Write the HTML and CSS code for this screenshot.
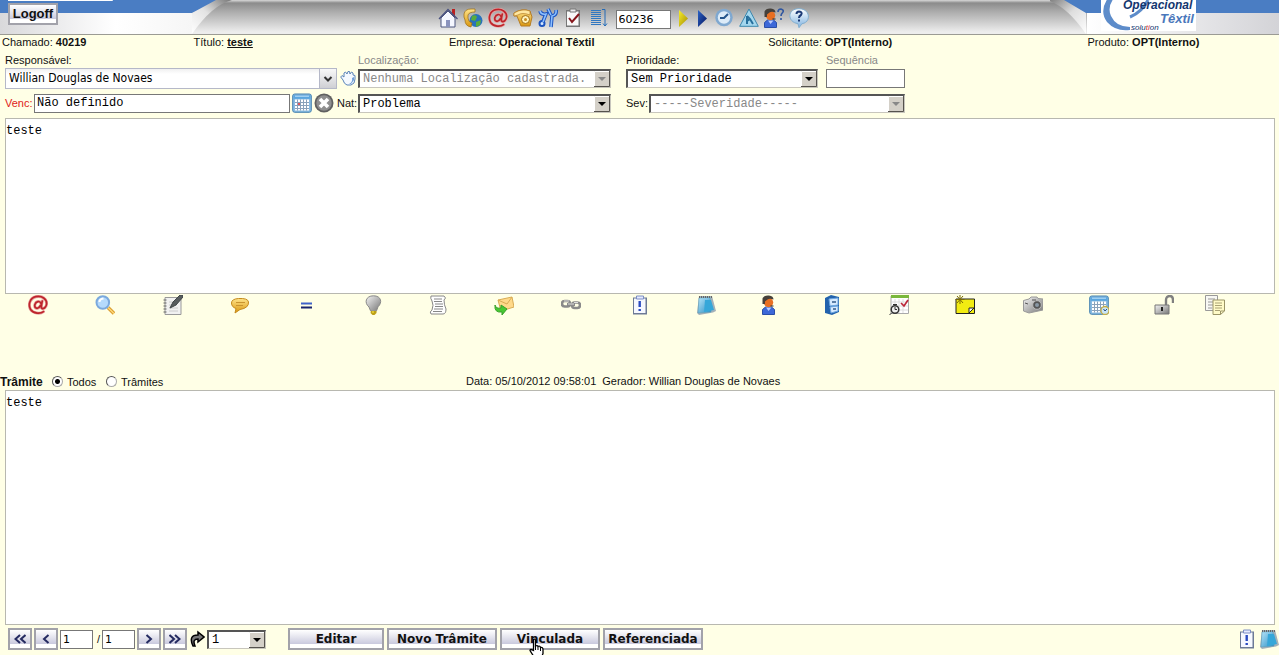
FILE: index.html
```html
<!DOCTYPE html>
<html lang="pt-BR">
<head>
<meta charset="utf-8">
<title>Chamado 40219</title>
<link rel="stylesheet" href="styles.css">
</head>
<body>
<svg class="defs" aria-hidden="true">
  <defs>
    <linearGradient id="g-blue" x1="0" y1="0" x2="1" y2="1"><stop offset="0" stop-color="#b9e6fa"/><stop offset="1" stop-color="#2a8fc4"/></linearGradient>
    <linearGradient id="g-glass" x1="0" y1="0" x2="0" y2="1"><stop offset="0" stop-color="#fff"/><stop offset="1" stop-color="#7fb2e0"/></linearGradient>
    <linearGradient id="g-gold" x1="0" y1="0" x2="0" y2="1"><stop offset="0" stop-color="#ffe48a"/><stop offset="1" stop-color="#d9960f"/></linearGradient>
    <linearGradient id="g-metal" x1="0" y1="0" x2="1" y2="1"><stop offset="0" stop-color="#f4f4f4"/><stop offset="1" stop-color="#777"/></linearGradient>
    <linearGradient id="g-arrow" x1="0" y1="0" x2="1" y2="1"><stop offset="0" stop-color="#f7ee2a"/><stop offset="1" stop-color="#a38a00"/></linearGradient>
    <linearGradient id="g-navy" x1="0" y1="0" x2="1" y2="1"><stop offset="0" stop-color="#2b63c8"/><stop offset="1" stop-color="#04145c"/></linearGradient>
    <linearGradient id="g-head" x1="0" y1="0" x2="1" y2="0"><stop offset="0" stop-color="#d9d9db"/><stop offset=".6" stop-color="#fff"/><stop offset="1" stop-color="#f6f6f6"/></linearGradient>
    <linearGradient id="g-foldl" x1="0" y1="1" x2="1" y2="0"><stop offset="0" stop-color="#fff"/><stop offset=".5" stop-color="#e3e3e3"/><stop offset="1" stop-color="#777"/></linearGradient>
    <linearGradient id="g-foldr" x1="1" y1="1" x2="0" y2="0"><stop offset="0" stop-color="#fff"/><stop offset=".5" stop-color="#dedede"/><stop offset="1" stop-color="#777"/></linearGradient>
    <linearGradient id="g-tail" x1="0" y1="0" x2="1" y2="0"><stop offset="0" stop-color="#fff"/><stop offset="1" stop-color="#d3d3d7"/></linearGradient>
  </defs>
  <symbol id="at" viewBox="0 0 20 20"><g fill="none" stroke-linecap="round"><path d="M15.500 16.600C12.500 19 5.500 18.800 2.600 14.500C-.2 9.500 2 3 7.800 1.700C14 .4 19 4 18.600 9C18.300 12.500 15.500 14 14 13.400C12.800 12.800 13.200 11.500 14.300 6M13 8.500C12 5.500 8 6 6.900 9.500C6 13.500 10 15 12.500 10.500" stroke="#e9a0a0" stroke-width="3"/><path d="M15.500 16.600C12.500 19 5.500 18.800 2.600 14.500C-.2 9.500 2 3 7.800 1.700C14 .4 19 4 18.600 9C18.300 12.500 15.500 14 14 13.400C12.800 12.800 13.200 11.500 14.300 6M13 8.500C12 5.500 8 6 6.900 9.500C6 13.500 10 15 12.500 10.500" stroke="#bd252b" stroke-width="1.700"/></g></symbol>
  <symbol id="calendar" viewBox="0 0 20 20"><rect x=".7" y="1" width="18.600" height="18.300" rx="2" fill="#88bbe2" stroke="#4682b0"/><path d="M1.500 2.200h17v3.600h-17z" fill="#5aa6df"/><path d="M3 3.200h14" stroke="#bfe2f8"/><path d="M3 6.500h14v11H3z" fill="#fff"/><path d="M5.500 6.500v11M8.500 6.500v11M11.500 6.500v11M14.500 6.500v11M3 9.500h14M3 12.500h14M3 15.500h14" stroke="#8aa2ba"/></symbol>
  <symbol id="book" viewBox="0 0 20 20"><path d="M3 1h13l4 15-3 1.500L3 20l-2-2z" fill="#a4b1b9"/><path d="M3 3l11-.8 1 14.800-13 1z" fill="url(#g-blue)" stroke="#5d9dbb" stroke-width=".6"/><path d="M9 5h6l3 10-10 2z" fill="#36a7d9"/><path d="M3 2h13" stroke="#666" stroke-dasharray="1 1" stroke-width="2"/></symbol>
  <symbol id="user" viewBox="0 0 20 20"><path d="M4.500 19.500v-5l3-2.500h6l3 2.500v5z" fill="#3d68d8" stroke="#2a4fa8"/><path d="M8 12.500l2.500 3.500 3-3.500z" fill="#b9ccff"/><circle cx="10.500" cy="7.500" r="4.700" fill="#e86f22"/><path d="M4.500 9V3.500Q6 0 11 .5q4.500.5 4.500 4-4-1.500-6 0L7 6.500V9z" fill="#45403b"/><path d="M12.500 11h3" stroke="#222"/></symbol>
  <symbol id="alert" viewBox="0 0 20 20"><path d="M3 2.500h14v17H3z" fill="#6d7a96"/><path d="M4 3.500h11.500v14.500H4z" fill="#f6f8ff"/><path d="M6.500 1h7v3h-7z" fill="#e5eaff" stroke="#7d8ec4"/><path d="M9.700 6v6" stroke="#2a4ac0" stroke-width="2.400"/><path d="M8.500 14h2.400v2H8.500z" fill="#2a4ac0"/></symbol>
  <symbol id="drop" viewBox="0 0 16 16"><path d="M0 0h16v16H0z" fill="#d4d0c8"/><path d="M.5 15V.5H15" fill="none" stroke="#fff"/><path d="M0 15.500h15.500V0" fill="none" stroke="#55524d"/><path d="M4 6h8l-4 4z" fill="currentColor"/></symbol>
  <symbol id="prev" viewBox="0 0 12 12"><path d="M8.500 2L4 6l4.500 4" fill="none" stroke="#252b61" stroke-width="2"/></symbol>
  <symbol id="prev2" viewBox="0 0 12 12"><path d="M6 2L1.500 6 6 10M11.500 2L7 6l4.500 4" fill="none" stroke="#252b61" stroke-width="2"/></symbol>
</svg>

<header class="top">
  <div class="wing wing-left">
    <svg class="wing-art" width="250" height="34" viewBox="0 0 250 34" aria-hidden="true"><path d="M0 12h192v22H0z" fill="url(#g-head)"/><path d="M0 0h222l-30 13H0z" fill="#4a7dc3"/><path d="M192 13L216 0h16Q212 5 192 34z" fill="url(#g-foldl)"/><path d="M8 .5h104.500V0" fill="none" stroke="#fff"/></svg>
    <button class="btn logoff">Logoff</button>
  </div>
  <nav class="tools" aria-label="Atalhos">
    <button class="icon" aria-label="Início"><svg viewBox="0 0 20 20"><path d="M14 1h3v8h-3z" fill="#bb2020"/><path d="M3 10l7-7 7 7v9H3z" fill="#f5f7ff" stroke="#4d567f"/><path d="M1 11l9-9.500L19.500 11" fill="none" stroke="#4a5280" stroke-width="1.300"/><path d="M8 12h4v7H8z" fill="#8a93bd"/></svg></button>
    <button class="icon" aria-label="Contatos"><svg viewBox="0 0 20 20"><circle cx="13" cy="12.500" r="6.500" fill="#2872bb"/><path d="M9 8q4-2 5 1l-2 4-4-1zM13 14l5-2-1 5-4 2z" fill="#59ad3c"/><path d="M1 6Q2 1 8 1h4v3Q6 4 5 7v3q0 4 4 5l-1 4Q2 18 2 12L1 9z" fill="url(#g-gold)" stroke="#9b6b10" stroke-width=".7"/></svg></button>
    <button class="icon" aria-label="E-mail"><svg><use href="#at"/></svg></button>
    <button class="icon" aria-label="Telefone"><svg viewBox="0 0 20 20"><path d="M1 5q8-5 16-2l2 6-2 9H8L4 8 1 8z" fill="url(#g-gold)" stroke="#b67d25"/><path d="M1 5q8-5 16-2v4Q9 4 5 7L1 8z" fill="#ffe7a0" stroke="#b67d25" stroke-width=".7"/><circle cx="12.500" cy="11.500" r="4" fill="#fff2ba" stroke="#a26d12"/><circle cx="12.500" cy="11.500" r="1.500" fill="#ca8e24"/></svg></button>
    <button class="icon" aria-label="Ferramentas"><svg viewBox="0 0 20 20"><g fill="none" stroke="#1c54c0" stroke-width="3.600"><path d="M2 3q1 4 6 3L4 16M18 2q1 5-4 6l-1 11M10 1l3 6"/></g><circle cx="4" cy="15.500" r="2.500" fill="#d7e9ff" stroke="#1c54c0" stroke-width="2"/><g fill="none" stroke="#8cc0ff" stroke-width="1.600"><path d="M2 3q1 4 6 3L5 14M18 2q1 5-4 6l-1 11M10 1l3 6"/></g></svg></button>
    <button class="icon" aria-label="Tarefas"><svg viewBox="0 0 20 20"><path d="M3 2h14v17H3z" fill="#777"/><path d="M4 3.500h11.500v14H4z" fill="#f8f8f8"/><path d="M7 1h6v3H7z" fill="#eee" stroke="#777"/><path d="M6 10l3 4 7-8" fill="none" stroke="#86161b" stroke-width="2"/></svg></button>
    <button class="icon" aria-label="Lista"><svg viewBox="0 0 20 20"><path d="M3 2.500h10M3 4.500h10M3 6.500h10M3 8.500h10M3 10.500h10M3 12.500h10M3 14.500h10M3 16.500h10" stroke="#3178c2"/><path d="M14 1.500h3V18M15 15.500l2 2.500 2-2.500" fill="none" stroke="#246bb6"/></svg></button>
    <input class="field jump" aria-label="Número do chamado" value="60236">
    <button class="icon slim" aria-label="Ir"><svg viewBox="0 0 14 20"><path d="M3 2l9 8.500L3 19z" fill="url(#g-arrow)"/></svg></button>
    <button class="icon slim" aria-label="Avançar"><svg viewBox="0 0 14 20"><path d="M3 2l9 8.500L3 19z" fill="url(#g-navy)"/></svg></button>
    <button class="icon" aria-label="Horário"><svg viewBox="0 0 20 20"><circle cx="10" cy="9.500" r="8.700" fill="#7fa8d0"/><circle cx="10" cy="9.500" r="6.200" fill="#dcebf8"/><path d="M14 6l-4 4H6" fill="none" stroke="#24558c" stroke-width="2"/></svg></button>
    <button class="icon" aria-label="Obras"><svg viewBox="0 0 20 20"><path d="M10 1L.7 18.300h18.600z" fill="#a4d7ee" stroke="#3b87ad"/><path d="M8 8v8M8 8l3 3 3 5M11 11l-3 2" fill="none" stroke="#27709d" stroke-width="2"/></svg></button>
    <button class="icon" aria-label="Usuários"><svg viewBox="0 0 20 20"><use href="#user" x="-4" width="20" height="20"/><path d="M14 4q0-3 3-3 3 1 2 3-2 2-2 4M17 10v2" fill="none" stroke="#3157a0" stroke-width="1.600"/></svg></button>
    <button class="icon" aria-label="Ajuda"><svg viewBox="0 0 20 20"><path d="M10 .7c12 0 12 14 3 15l-3 4-1-4C-2 14-2 .7 10 .7z" fill="url(#g-glass)" stroke="#83afd0"/><path d="M7.500 6q0-2.500 2.500-2.500 4 .5 2 3.500-2 1-2 3M10 11.500v2" fill="none" stroke="#1c3a76" stroke-width="2"/></svg></button>
  </nav>
  <div class="wing wing-right">
    <svg class="wing-art" width="229" height="34" viewBox="0 0 229 34" aria-hidden="true"><path d="M37 12h192v22H37z" fill="url(#g-tail)"/><path d="M10 0h219v13H35z" fill="#4a7dc3"/><path d="M-4 0h18l22 13v21Q16 5-4 0z" fill="url(#g-foldr)"/>
      <path d="M51 0h95v31H51z" fill="#fff"/><path d="M58-2Q49 11 57 22q9 10 23 8v-3Q66 27 61 16 57 7 64-2z" fill="#5d8cca"/><path d="M80 17Q92 12 98 0" fill="none" stroke="#5d8cca" stroke-width="3"/>
      <text class="logo-a" x="73" y="9">Operacional</text><text class="logo-b" x="110" y="23">Têxtil</text><text class="logo-c" x="81" y="30">solu<tspan fill="#cf3030">ti</tspan>on</text></svg>
  </div>
</header>

<main>
  <div class="info">
    <span>Chamado: <b>40219</b></span>
    <span>Título: <a href="#titulo"><b>teste</b></a></span>
    <span>Empresa: <b>Operacional Têxtil</b></span>
    <span>Solicitante: <b>OPT(Interno)</b></span>
    <span>Produto: <b>OPT(Interno)</b></span>
  </div>

  <form class="form">
    <div class="col-a">
      <label for="resp">Responsável:</label>
      <div class="line">
        <span class="combo"><input id="resp" value="Willian Douglas de Novaes"><button type="button" aria-label="Abrir lista"><svg viewBox="0 0 16 20"><path d="M4.500 8l3.500 3.500L11.500 8" fill="none" stroke="#333" stroke-width="2"/></svg></button></span>
        <button type="button" class="icon hand" aria-label="Assumir"><svg viewBox="0 0 16 16"><path d="M3 10L.7 7 2 5.500 4 7V3l1.500-1L7 4l1-2.500h1.500L10 4l1.500-2L13 3v2l2 .5V9q0 5-4 6H7q-3-1-4-5z" fill="#f4f9ff" stroke="#5b84b8"/><path d="M12 8q1 4-3 6h2l3-4V7z" fill="#6d9dd7"/></svg></button>
      </div>
      <div class="line">
        <label class="due" for="venc">Venc:</label><input class="field grow" id="venc" value="Não definido">
        <button type="button" class="icon cal" aria-label="Calendário"><svg viewBox="0 0 20 20"><use href="#calendar"/><path d="M6 10h2v2H6z" fill="#e0555a"/></svg></button>
        <button type="button" class="icon cal" aria-label="Limpar"><svg viewBox="0 0 20 20"><circle cx="10" cy="10" r="9.500" fill="#606060"/><circle cx="10" cy="10" r="7.700" fill="#8f8f8f"/><path d="M6 6l8 8M14 6l-8 8" stroke="#fff" stroke-width="3.600"/></svg></button>
        <label class="nat" for="nat">Nat:</label>
      </div>
    </div>
    <div class="col-b">
      <label class="off" for="loc">Localização:</label>
      <div class="line"><span class="select off"><select id="loc" disabled><option>Nenhuma Localização cadastrada.</option></select><svg><use href="#drop"/></svg></span></div>
      <div class="line"><span class="select"><select id="nat"><option>Problema</option></select><svg><use href="#drop"/></svg></span></div>
    </div>
    <div class="col-c">
      <div class="pair"><label for="prio">Prioridade:</label><label class="off" for="seq">Sequência</label></div>
      <div class="line pair"><span class="select"><select id="prio"><option>Sem Prioridade</option></select><svg><use href="#drop"/></svg></span><input class="field" id="seq"></div>
      <div class="line"><label class="sev" for="sev">Sev:</label><span class="select off"><select id="sev" disabled><option>-----Severidade-----</option></select><svg><use href="#drop"/></svg></span></div>
    </div>
  </form>

  <textarea class="box" aria-label="Descrição">teste</textarea>

  <div class="actions">
    <button class="icon" aria-label="E-mail"><svg><use href="#at"/></svg></button>
    <button class="icon" aria-label="Pesquisar"><svg viewBox="0 0 20 20"><path d="M13 12.500l6 6" stroke="#d99a2b" stroke-width="3.600"/><path d="M13 12.500l6 6" stroke="#ffd878" stroke-width="1.500"/><circle cx="7.800" cy="7.500" r="6.300" fill="#b5dafc" stroke="#7ba9dd" stroke-width="2"/><path d="M4.500 7q0-3 4-3.500" stroke="#fff" stroke-width="2" fill="none"/></svg></button>
    <button class="icon" aria-label="Editar nota"><svg viewBox="0 0 20 20"><path d="M2 2.500h16v17H2z" fill="#f1f1f1" stroke="#999"/><path d="M.5 5h3M.5 8h3M.5 11h3M.5 14h3M.5 17h3" stroke="#666"/><path d="M6 7h8M6 10h8M6 13h9M6 16h9" stroke="#ccc"/><path d="M7 13l3-6L17 0h3v2l-7 8z" fill="#575c5e" stroke="#404648"/></svg></button>
    <button class="icon" aria-label="Comentário"><svg viewBox="0 0 20 20"><path d="M1.500 8q0-4 7-4.500Q18 3 18.500 7q.5 6-8.500 7.500L5 18l1-4.500Q1.500 12 1.500 8z" fill="url(#g-gold)" stroke="#c58a1c"/><path d="M6 7.500h9M6 10.500h7" stroke="#c99430"/></svg></button>
    <button class="icon" aria-label="Igual"><svg viewBox="0 0 20 20"><path d="M4 8.500h11" stroke="#3f62c8" stroke-width="2"/><path d="M4 12.500h11" stroke="#17236e" stroke-width="2"/></svg></button>
    <button class="icon" aria-label="Ideia"><svg viewBox="0 0 20 20"><path d="M10.500.800c8 0 9 7 4.500 11l-1.500 4h-6L6 12C1 8 2.500.800 10.500.800z" fill="url(#g-metal)" stroke="#888"/><path d="M8 16h5.500v2l-2 2H9.500l-2-2z" fill="#bda017"/><path d="M9 17h2" stroke="#ffef4a"/></svg></button>
    <button class="icon" aria-label="Documento"><svg viewBox="0 0 20 20"><path d="M3 1h13q3 2 0 4 0 5 2 9 0 5-3 5H3q-2-2 1-4Q6 10 4 6 2 3 3 1z" fill="#fff" stroke="#888"/><path d="M6 4h8M6 6.500h8M7 9h8M7 11.500h8M6 14h9M5 16.500h9" stroke="#888"/></svg></button>
    <button class="icon" aria-label="Enviar"><svg viewBox="0 0 20 20"><path d="M4 5l14-3 2 10-13 4z" fill="#ffd989" stroke="#d8ab54"/><path d="M4 5l9 4 5-7" fill="none" stroke="#d8ab54"/><path d="M1 10q1 4 6 3v-3l6 4-5 6v-3Q0 18 1 10z" fill="#48c832" stroke="#37a02a"/></svg></button>
    <button class="icon" aria-label="Vincular"><svg viewBox="0 0 20 20"><g fill="none" stroke="#8a8a8a" stroke-width="2.600"><rect x="1" y="6" width="8" height="5.500" rx="2.700"/><rect x="11" y="7.500" width="8" height="5.500" rx="2.700"/></g><path d="M6 9.500h8" stroke="#8a8a8a" stroke-width="3"/><path d="M7 9h6M3 6h5M13 7.500h4" stroke="#ddd"/></svg></button>
    <button class="icon" aria-label="Alerta"><svg><use href="#alert"/></svg></button>
    <button class="icon" aria-label="Caderno"><svg><use href="#book"/></svg></button>
    <button class="icon" aria-label="Usuário"><svg><use href="#user"/></svg></button>
    <button class="icon" aria-label="Arquivo"><svg viewBox="0 0 20 20"><path d="M3 3l6-3 8 2v15l-7 3-7-2z" fill="#2363ad"/><path d="M7 4l9-1v7l-8 1zM8 12l8-1v5l-7 2z" fill="#d7eaff" stroke="#6da6df"/><path d="M10 7h4M11 14h3" stroke="#345b8a" stroke-width="1.500"/></svg></button>
    <button class="icon" aria-label="Agenda"><svg viewBox="0 0 20 20"><path d="M2 1h17.500v17.500H2z" fill="#fff" stroke="#aaa"/><path d="M2 0h18v3H2z" fill="#7ab83c"/><path d="M6 4v14M10 4v14M14 4v14M3 7h16M3 11h16M3 15h16" stroke="#ddd"/><path d="M12 8l3 3 4-6" fill="none" stroke="#bc2638" stroke-width="1.700"/><circle cx="6" cy="14.500" r="3.800" fill="#eee" stroke="#333" stroke-width="1.500"/><path d="M6 12v2.500h2M2.500 18L.5 20M4 9.500h4" fill="none" stroke="#333"/></svg></button>
    <button class="icon" aria-label="Novo lembrete"><svg viewBox="0 0 20 20"><path d="M1 4h18.500v14.500H1z" fill="#f2ec12" stroke="#222"/><path d="M14 18v-5h5" fill="#fff" stroke="#222"/><path d="M14 18l5-5" stroke="#222"/><path d="M5 0v9M.5 4.500h9M2 1l6 7M8 1L2 8" stroke="#796a05"/></svg></button>
    <button class="icon" aria-label="Foto"><svg viewBox="0 0 20 20"><path d="M.5 5.500L6 4l2-2h6l1 1.500 5 .5v11L6 18l-5.500-2z" fill="url(#g-metal)" stroke="#999"/><circle cx="14" cy="10" r="4.300" fill="#555" stroke="#bbb"/><circle cx="14" cy="10" r="2" fill="#8998a4"/><path d="M9 5h4M2 8l3 1" stroke="#555"/></svg></button>
    <button class="icon" aria-label="Calendário"><svg viewBox="0 0 20 20"><use href="#calendar"/><circle cx="16" cy="15.500" r="4" fill="#c8e4f7" stroke="#c5ae46" stroke-width="1.300"/><path d="M14.500 14l1.500 2 2-2" fill="none" stroke="#244d7e"/></svg></button>
    <button class="icon" aria-label="Desbloquear"><svg viewBox="0 0 20 20"><path d="M12 10V5q0-4 4-4 3 0 3 4v3" fill="none" stroke="#808080" stroke-width="2.400"/><path d="M1 10h14v9H1z" fill="url(#g-metal)" stroke="#777"/><path d="M7 12h2v4H7z" fill="#222"/></svg></button>
    <button class="icon" aria-label="Copiar"><svg viewBox="0 0 20 20"><path d="M.5.5h12v15H.5z" fill="#f8f8f4" stroke="#999"/><path d="M3 4h7M3 7h5M3 10h5M3 13h4" stroke="#999"/><path d="M8 5h11.500v11l-4 3.500H8z" fill="#fffbc7" stroke="#9a9466"/><path d="M10 8h7M10 10.500h7M10 13h7M10 15.500h5" stroke="#aaa375"/><path d="M15.500 19.500V16h4" fill="none" stroke="#9a9466"/></svg></button>
  </div>

  <div class="steps">
    <b>Trâmite</b>
    <label><input type="radio" name="t" checked>Todos</label>
    <label><input type="radio" name="t">Trâmites</label>
    <span class="meta"><span>Data: 05/10/2012 09:58:01</span><span>Gerador: Willian Douglas de Novaes</span></span>
  </div>

  <textarea class="box rest" aria-label="Trâmite">teste</textarea>
</main>

<footer class="foot">
  <div class="pager">
    <button class="btn" aria-label="Primeiro"><svg><use href="#prev2"/></svg></button>
    <button class="btn" aria-label="Anterior"><svg><use href="#prev"/></svg></button>
    <input class="field page" aria-label="Página" value="1">
    <span class="slash">/</span>
    <input class="field page" aria-label="Total" value="1">
    <button class="btn" aria-label="Próximo"><svg class="flip"><use href="#prev"/></svg></button>
    <button class="btn" aria-label="Último"><svg class="flip"><use href="#prev2"/></svg></button>
    <svg class="turn" viewBox="0 0 15 18" aria-hidden="true"><path d="M3 16Q-2 5 8 5V2l6 5-6 5V9Q2 9 5 16z" fill="#777" stroke="#000" stroke-width="1.500"/></svg>
    <span class="select goto"><select aria-label="Ir para"><option>1</option></select><svg><use href="#drop"/></svg></span>
  </div>
  <div class="commands">
    <button class="btn wide">Editar</button>
    <button class="btn wide tramite">Novo Trâmite</button>
    <button class="btn wide">Vinculada<svg class="cursor" viewBox="0 0 18 20" aria-hidden="true"><path d="M5.500 1.500q2-1 2 1V8q2-1 2.500.500 2-1 2.500 1 2.500-.5 2.500 2v4l-2 5H7l-5-8q0-2 3.500 0z" fill="#fff" stroke="#000" stroke-width="1.300"/><path d="M7.500 8v4M10 9v3M12.500 10v3" stroke="#000"/></svg></button>
    <button class="btn wide">Referenciada</button>
  </div>
  <div class="end">
    <button class="icon" aria-label="Alerta"><svg><use href="#alert"/></svg></button>
    <button class="icon" aria-label="Caderno"><svg><use href="#book"/></svg></button>
  </div>
</footer>
</body>
</html>
```

FILE: styles.css
```css
* { box-sizing: border-box; }
body {
  margin: 0;
  min-height: 100vh;
  display: flex;
  flex-direction: column;
  background: #ffffe6;
  color: #111;
  font: 11px/14px "Liberation Sans", Arial, sans-serif;
  overflow-x: hidden;
}
svg { display: block; }
.defs { position: absolute; width: 0; height: 0; }
button { font: inherit; color: inherit; cursor: pointer; }
input, select, textarea {
  font: 12px/14px "Liberation Mono", "Courier New", monospace;
  color: #000;
  margin: 0;
  border-radius: 0;
  min-width: 0;
}
.icon { flex: none; width: 20px; height: 20px; padding: 0; border: 0; background: none; }
.icon svg { width: 100%; height: 100%; }

.top { display: flex; height: 35px; border-bottom: 1px solid #9b9b94; background: linear-gradient(#d8d8d8 0, #8b8b8b 3px, #adadad 12px, #ededed 32px); }
.wing { position: relative; flex: none; }
.wing-left { width: 192px; padding: 3px 8px; }
.wing-right { width: 229px; }
.wing-art { position: absolute; left: 0; top: 0; overflow: hidden; }
.logo-a { font: italic bold 12px "Liberation Sans", sans-serif; fill: #14366f; }
.logo-b { font: italic bold 13px "Liberation Sans", sans-serif; fill: #4b78bb; }
.logo-c { font: italic 8px "Liberation Sans", sans-serif; fill: #14366f; }
.tools { position: relative; flex: 1; display: flex; justify-content: center; align-items: center; gap: 5px; padding: 2px 0 0 4px; }
.tools .jump { width: 55px; height: 19px; margin: 2px 0 0 3px; }
.icon.slim { width: 14px; }

.btn {
  position: relative;
  height: 22px;
  padding: 0;
  border: 2px solid #a2a2aa;
  background: linear-gradient(#fff 0, #e4e4ee 40%, #cbcbdf 75%, #fff 80%);
  font: bold 12px/16px "DejaVu Sans", Verdana, sans-serif;
  color: #111;
}
.logoff { width: 50px; font-family: "Liberation Sans", Arial, sans-serif; font-size: 13px; }

main { flex: 1; display: flex; flex-direction: column; }
.info { display: grid; grid-template-columns: 3fr 4fr 5fr 5fr 3fr; padding-left: 2px; height: 18px; line-height: 15px; }
.info a { color: inherit; }

.form { display: flex; padding-left: 5px; }
.form label { display: block; white-space: nowrap; }
.col-a { width: 353px; }
.col-b { width: 253px; margin-right: 15px; }
.col-c { width: 279px; }
.line { display: flex; align-items: center; height: 22px; margin-bottom: 3px; }
.pair { display: grid; grid-template-columns: 192px 79px; gap: 8px; }
.form .off { color: #888; }
.field { height: 19px; padding: 0 2px; border: 1px solid #777; background: #fff; }
.line .field { width: 100%; }
.grow { flex: 1; }
.form .due { color: #e02020; width: 29px; }
.cal { margin-left: 2px; }
.nat { width: 24px; padding-left: 3px; }
.sev { flex: none; width: 23px; }
.combo { display: flex; width: 332px; height: 21px; border: 1px solid #b5b8c8; }
.combo input { flex: 1; border: 0; padding: 0 3px; font: 12px/16px "DejaVu Sans Condensed", Tahoma, sans-serif; background: linear-gradient(#f0f0f0, #fff 5px); }
.combo button { width: 17px; padding: 0; border: 0; border-left: 1px solid #b5b8c8; background: linear-gradient(#f8f8f8, #cfcfd4); }
.hand { width: 16px; height: 16px; margin-left: 3px; }
.select { position: relative; display: block; width: 100%; }
.select select {
  appearance: none;
  display: block;
  width: 100%;
  height: 19px;
  padding: 0 18px 0 3px;
  border: 1px solid #c8c6bd;
  border-top: 2px solid #555;
  border-left: 2px solid #555;
  background: #fff;
  color: #000;
  opacity: 1;
}
.select.off select { color: #888; }
.select svg { position: absolute; right: 1px; top: 2px; width: 16px; height: 16px; pointer-events: none; color: #000; }
.select.off svg { color: #888; }

.box { display: block; height: 176px; margin: 1px 4px 0 5px; padding: 5px 0; border: 1px solid #b8b8b0; background: #fff; resize: none; outline: 0; }
.rest { flex: 1; margin-top: 0; min-height: 100px; }
.actions {
  display: grid;
  grid-template-columns: 67fr 68fr 67fr 67fr 66fr 65fr 66fr 67fr 69fr 66fr 62fr 64fr 67fr 66fr 68fr 66fr 65fr 51fr 74fr;
  padding: 1px 0 0 28px;
}
.steps { display: flex; align-items: center; height: 14px; margin: 60px 0 1px; }
.steps b { width: 52px; font-size: 12px; }
.steps label { display: flex; align-items: center; width: 54px; gap: 4px; white-space: nowrap; }
.steps label input {
  appearance: none;
  flex: none;
  width: 11px;
  height: 11px;
  margin-bottom: 2px;
  border: 1px solid #aaa;
  border-top-color: #555;
  border-left-color: #555;
  border-radius: 50%;
  background: #fff;
}
.steps label input:checked { background: radial-gradient(#000 0 2px, #fff 3px); }
.meta { display: flex; gap: 6px; margin-left: 306px; padding-bottom: 2px; }

.foot { display: flex; align-items: center; padding: 3px 0 5px 8px; }
.pager, .commands, .end { display: flex; align-items: center; }
.pager { gap: 2px; }
.pager .btn { width: 24px; }
.pager .btn svg { width: 12px; height: 12px; margin: auto; }
.flip { transform: scaleX(-1); }
.page { width: 33px; }
.jump, .page { font: 11px/14px "DejaVu Sans", Verdana, sans-serif; }
.slash { width: 5px; text-align: right; }
.pager .turn { width: 15px; height: 18px; margin-left: 1px; }
.goto { width: 59px; }
.commands { gap: 3px; margin-left: 22px; }
.wide { width: 100px; }
.wide:first-child { width: 96px; }
.wide.tramite { width: 110px; }
.cursor { position: absolute; left: 26px; top: 8px; width: 18px; height: 20px; }
.end { margin-left: auto; gap: 2px; }
```
